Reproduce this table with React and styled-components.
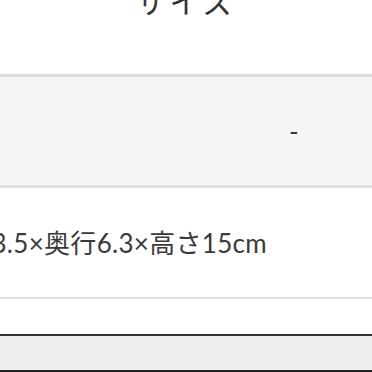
import React from "react";
import styled, { createGlobalStyle } from "styled-components";

const Global = createGlobalStyle`
  *, *::before, *::after { box-sizing: border-box; }
  html, body { margin: 0; padding: 0; background: #fff; }
  body { font-family: Lato, "Noto Sans CJK JP", sans-serif; color: #333; overflow: hidden; }
`;

const Table = styled.div`
  width: 372px;
  display: flex;
  flex-direction: column;
`;

const Row = styled.div`
  height: ${(p) => p.$h}px;
  flex-shrink: 0;
  background: ${(p) => p.$bg || "#fff"};
  border-bottom: ${(p) => p.$bw || 2}px solid ${(p) => p.$line || "#e0e0e0"};
  display: flex;
  align-items: ${(p) => p.$align || "center"};
  justify-content: ${(p) => p.$justify || "flex-end"};
  padding: ${(p) => p.$pad || "0"};
  white-space: nowrap;
  overflow: visible;
`;

const Title = styled.span`
  font-size: 30px;
  line-height: 30px;
  letter-spacing: 4px;
  color: #333;
  flex-shrink: 0;
`;

const Value = styled.span`
  font-size: 26px;
  line-height: 30px;
  letter-spacing: 0.3px;
  color: #3a3a3a;
  flex-shrink: 0;
`;

export default function App() {
  return (
    <>
      <Global />
      <Table>
        <Row $h={77} $bw={3} $line="#dcdcdc" $align="flex-end" $justify="center" $pad="0 0 58px 0">
          <Title>サイズ</Title>
        </Row>
        <Row $h={111} $bw={3} $bg="#f5f5f5" $line="#e1e1e1" $pad="0 73px 0 0">
          <Value>-</Value>
        </Row>
        <Row $h={111} $line="#e0e0e0" $pad="0 105px 0 0">
          <Value>幅3.5×奥行6.3×高さ15cm</Value>
        </Row>
        <Row $h={37} $line="#333" />
        <Row $h={36} $bg="#efefef" $line="#222" />
      </Table>
    </>
  );
}
